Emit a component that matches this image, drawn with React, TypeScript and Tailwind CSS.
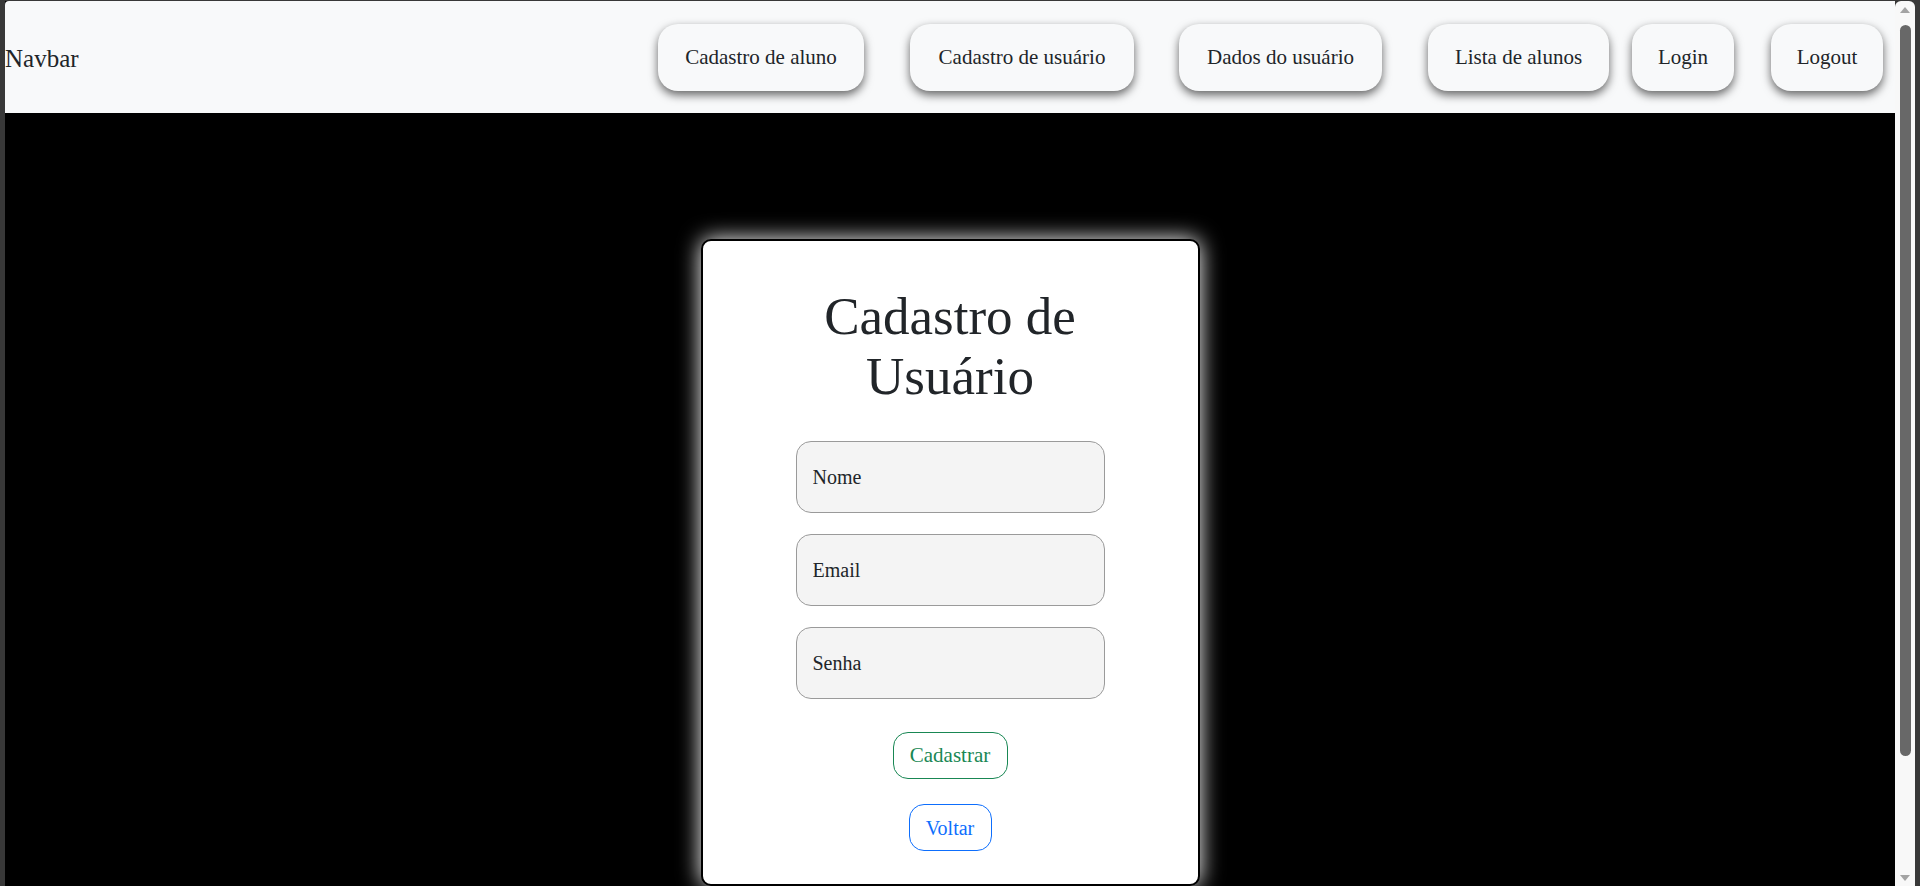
const navLinks = [
  { label: "Cadastro de aluno", w: "w-[206px]", ml: "ml-0" },
  { label: "Cadastro de usuário", w: "w-[224px]", ml: "ml-[46px]" },
  { label: "Dados do usuário", w: "w-[203px]", ml: "ml-[45px]" },
  { label: "Lista de alunos", w: "w-[181px]", ml: "ml-[46px]" },
  { label: "Login", w: "w-[102px]", ml: "ml-[23px]" },
  { label: "Logout", w: "w-[112px]", ml: "ml-[37px]" },
];

const fields = ["Nome", "Email", "Senha"];

const Scrollbar = () => (
  <div className="w-[20px] h-full bg-[#f8f8f8] rounded-t-[6px] flex flex-col items-center relative">
    <svg width="10" height="6" viewBox="0 0 10 6" className="mt-[6px]">
      <path d="M0 6 L5 0 L10 6 Z" fill="#a3a3a3" />
    </svg>
    <div className="mt-[12px] w-[11px] h-[731px] rounded-full bg-[#686868]" />
    <svg width="10" height="6" viewBox="0 0 10 6" className="absolute bottom-[5px]">
      <path d="M0 0 L5 6 L10 0 Z" fill="#a3a3a3" />
    </svg>
  </div>
);

export default function App() {
  return (
    <div className="w-full h-[886px] bg-[#383838] pl-[5px] pt-[1px] pr-[5px] flex overflow-hidden font-['Liberation_Serif',serif] text-[#212529]">
      <div className="flex-1 h-full flex flex-col bg-black overflow-hidden">
        {/* Navbar */}
        <nav className="h-[112px] shrink-0 bg-[#f8f9fa] flex items-center pr-[12px] rounded-tl-[4px]">
          <span className="text-[25px] leading-none pt-[2px]">Navbar</span>
          <div className="ml-auto flex items-center">
            {navLinks.map((l) => (
              <button
                key={l.label}
                className={`${l.w} ${l.ml} h-[67px] pt-[2px] rounded-[20px] bg-[#f8f9fa] text-[21px] text-[#212529] shadow-[0_4px_10px_rgba(0,0,0,0.6)]`}
              >
                {l.label}
              </button>
            ))}
          </div>
        </nav>

        {/* Main */}
        <main className="flex justify-center pt-[126px] pb-[20px]">
          <div className="w-[499px] bg-white border-2 border-black rounded-[10px] shadow-[0_0_22px_rgba(255,255,255,1)] pt-[45px] pb-[33px] flex flex-col items-center">
            <h1 className="text-[53px] leading-[60px] text-center font-normal text-[#212529]">
              Cadastro de
              <br />
              Usuário
            </h1>

            <form className="mt-[35px] flex flex-col items-center gap-[21px]">
              {fields.map((f) => (
                <input
                  key={f}
                  placeholder={f}
                  type={f === "Senha" ? "password" : "text"}
                  className="w-[309px] h-[72px] rounded-[15px] border border-[#9a9a9a] bg-[#f4f4f4] px-[16px] text-[20px] placeholder:text-[#212529] outline-none"
                />
              ))}
            </form>

            <button className="mt-[33px] w-[115px] h-[47px] rounded-[15px] border border-[#198754] text-[#198754] text-[21px]">
              Cadastrar
            </button>
            <button className="mt-[25px] w-[83px] h-[47px] rounded-[15px] border border-[#0d6efd] text-[#0d6efd] text-[20px]">
              Voltar
            </button>
          </div>
        </main>
      </div>
      <Scrollbar />
    </div>
  );
}
